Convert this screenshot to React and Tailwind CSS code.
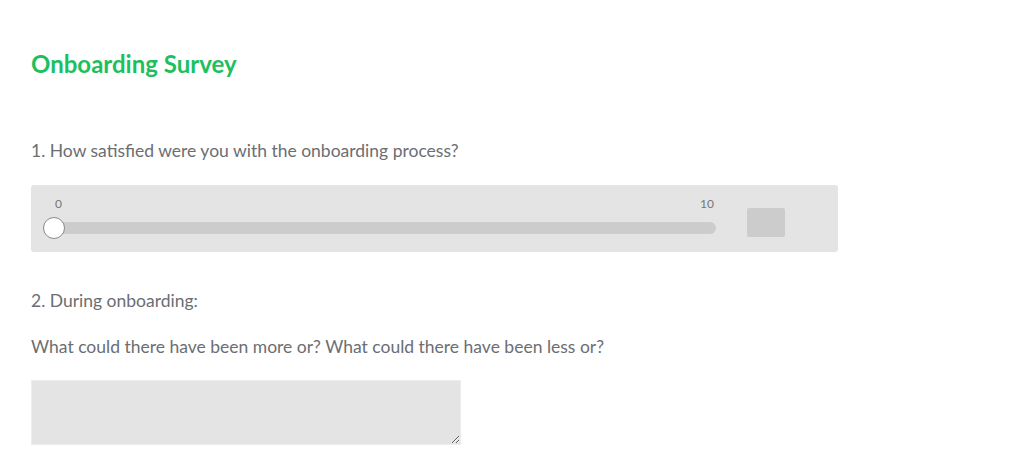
export default function App() {
  return (
    <div className="w-[1024px] h-[459px] bg-white overflow-hidden pl-[31px] text-[#6b6e72]" style={{ fontFamily: 'Lato, "Liberation Sans", sans-serif' }}>
      <h1 className="pt-[49px] text-[24px] leading-[30px] font-bold text-[#1dbf5e]">Onboarding Survey</h1>
      <p className="mt-[62px] text-[17.5px] leading-[20px]">1. How satisfied were you with the onboarding process?</p>
      <div className="mt-[24px] w-[807px] h-[67px] bg-[#e4e4e4] rounded-[3px] flex items-start pl-[12px]">
        <div className="w-[673px] pt-[12px]">
          <div className="flex justify-between text-[12px] leading-[14px] text-[#777] pl-[12px] pr-[2px]">
            <span>0</span>
            <span>10</span>
          </div>
          <div className="relative mt-[11px] h-[12px] rounded-full bg-[#cccccc]">
            <div className="absolute left-0 top-[-5px] w-[22px] h-[22px] rounded-full bg-white border border-[#8a8a8a]" />
          </div>
        </div>
        <div className="ml-[31px] mt-[23px] w-[38px] h-[29px] rounded-[2px] bg-[#cccccc]" />
      </div>
      <p className="mt-[39px] text-[17.5px] leading-[20px]">2. During onboarding:</p>
      <p className="mt-[26px] text-[17.5px] leading-[20px]">What could there have been more or? What could there have been less or?</p>
      <textarea className="mt-[23px] block w-[430px] h-[65px] bg-[#e4e4e4] border border-[#ededed] outline-none resize-y" />
    </div>
  );
}
